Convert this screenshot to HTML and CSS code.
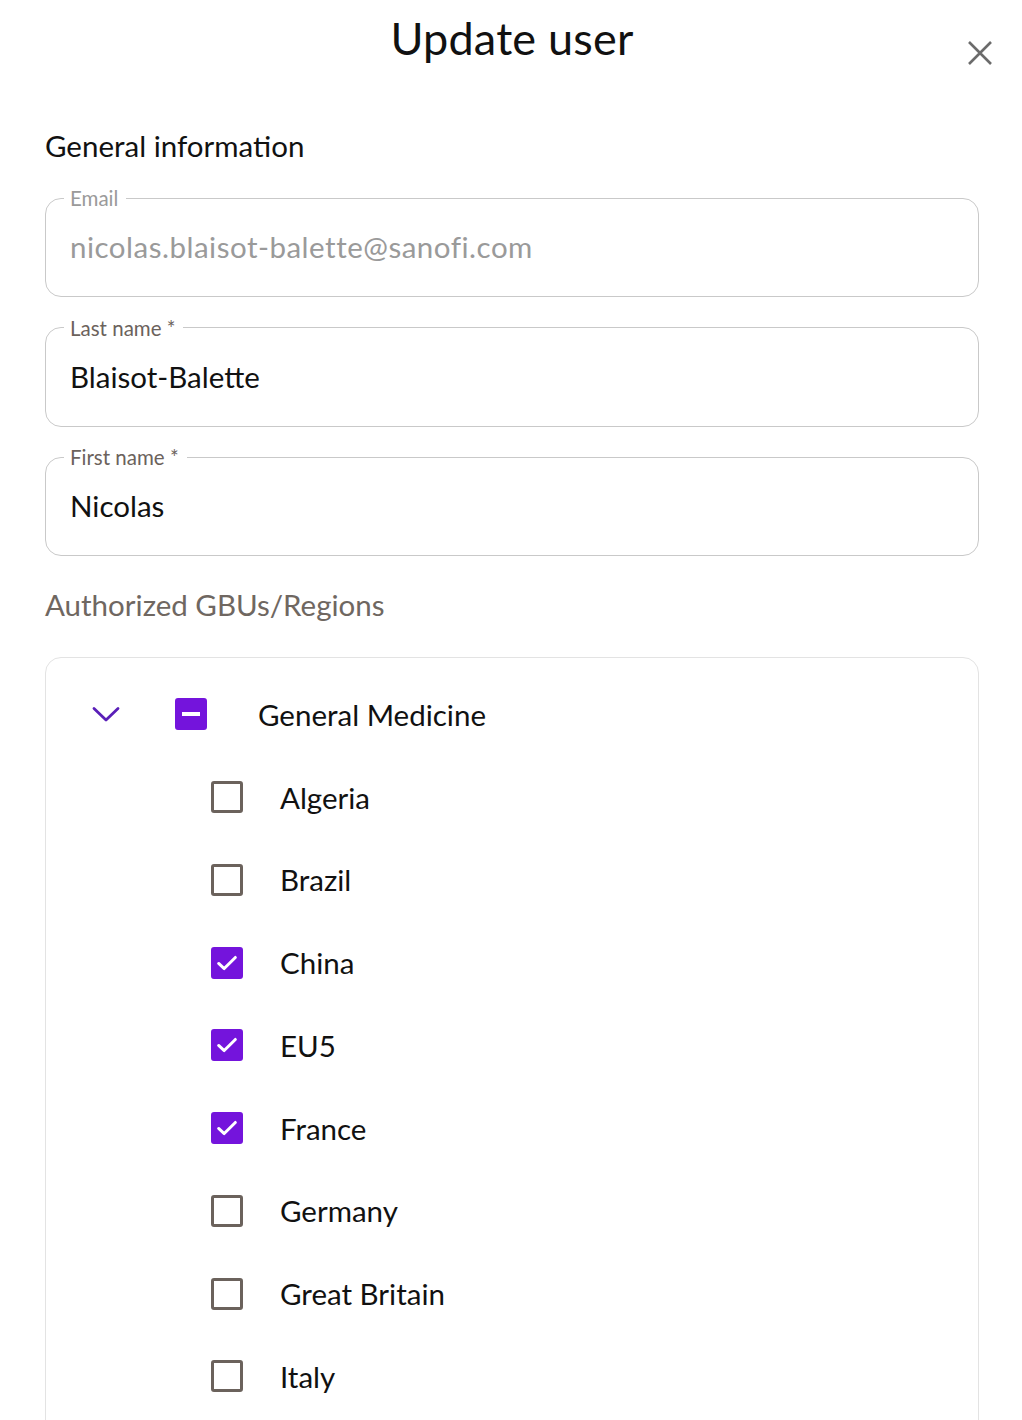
FILE: index.html
```html
<!DOCTYPE html>
<html lang="en">

<head>
    <meta charset="UTF-8">
    <meta name="viewport" content="width=device-width, initial-scale=1.0" />
    <title>Update user</title>
    <link rel="stylesheet" href="styles.css">
</head>

<body>
    <div class="dialog">
        <!-- Header -->
        <header class="dialog-header">
            <h1>Update user</h1>
            <button class="close-btn" aria-label="Close">
                <svg width="28" height="28" viewBox="0 0 28 28">
                    <path d="M3 3 L25 25 M25 3 L3 25" stroke="#6b6b6b" stroke-width="2.6" fill="none" />
                </svg>
            </button>
        </header>

        <h2 class="section-title">General information</h2>

        <!-- Fields -->
        <fieldset class="field disabled">
            <legend>Email</legend>
            <div class="field-value">nicolas.blaisot-balette@sanofi.com</div>
        </fieldset>

        <fieldset class="field">
            <legend>Last name *</legend>
            <div class="field-value">Blaisot-Balette</div>
        </fieldset>

        <fieldset class="field">
            <legend>First name *</legend>
            <div class="field-value">Nicolas</div>
        </fieldset>

        <h2 class="section-title muted">Authorized GBUs/Regions</h2>

        <!-- GBU tree -->
        <div class="tree">
            <div class="tree-row parent">
                <span class="chevron">
                    <svg width="28" height="28" viewBox="0 0 28 28">
                        <path d="M2 8.5 L14 20 L26 8.5" stroke="#5a1fb8" stroke-width="2.8" fill="none" stroke-linecap="round" stroke-linejoin="round" />
                    </svg>
                </span>
                <span class="checkbox partial"><span class="dash"></span></span>
                <span class="label">General Medicine</span>
            </div>

            <div class="tree-row child">
                <span class="checkbox"></span>
                <span class="label">Algeria</span>
            </div>
            <div class="tree-row child">
                <span class="checkbox"></span>
                <span class="label">Brazil</span>
            </div>
            <div class="tree-row child">
                <span class="checkbox checked">
                    <svg width="28" height="28" viewBox="0 0 28 28"><path d="M5 14.5 L11 20 L23 8" stroke="#fff" stroke-width="3.2" fill="none" stroke-linecap="round" stroke-linejoin="round" /></svg>
                </span>
                <span class="label">China</span>
            </div>
            <div class="tree-row child">
                <span class="checkbox checked">
                    <svg width="28" height="28" viewBox="0 0 28 28"><path d="M5 14.5 L11 20 L23 8" stroke="#fff" stroke-width="3.2" fill="none" stroke-linecap="round" stroke-linejoin="round" /></svg>
                </span>
                <span class="label">EU5</span>
            </div>
            <div class="tree-row child">
                <span class="checkbox checked">
                    <svg width="28" height="28" viewBox="0 0 28 28"><path d="M5 14.5 L11 20 L23 8" stroke="#fff" stroke-width="3.2" fill="none" stroke-linecap="round" stroke-linejoin="round" /></svg>
                </span>
                <span class="label">France</span>
            </div>
            <div class="tree-row child">
                <span class="checkbox"></span>
                <span class="label">Germany</span>
            </div>
            <div class="tree-row child">
                <span class="checkbox"></span>
                <span class="label">Great Britain</span>
            </div>
            <div class="tree-row child">
                <span class="checkbox"></span>
                <span class="label">Italy</span>
            </div>
        </div>
    </div>
</body>

</html>
```

FILE: styles.css
```css
/* Reset */
* {
    margin: 0;
    padding: 0;
    box-sizing: border-box;
}

body {
    font-family: Lato, 'Noto Sans', sans-serif;
    background-color: #fff;
    color: #1a1a1a;
}

.dialog {
    padding: 0 43px 0 45px;
}

/* Header */
.dialog-header {
    position: relative;
    height: 76px;
    display: flex;
    justify-content: center;
    align-items: center;
}

.dialog-header h1 {
    font-size: 45px;
    font-weight: 400;
    color: #111;
    letter-spacing: 0.2px;
}

.close-btn {
    position: absolute;
    right: -15px;
    top: 39px;
    background: none;
    border: none;
    cursor: pointer;
    display: flex;
}

.section-title {
    font-size: 29.5px;
    font-weight: 400;
    color: #111;
    margin-top: 52px;
    margin-bottom: 22px;
    line-height: 36px;
}

.section-title.muted {
    color: #6f6761;
    margin-top: 31px;
    margin-bottom: 34px;
}

/* Outlined fields */
.field {
    border: 1px solid #c9c9c9;
    border-radius: 16px;
    padding: 0 24px;
    margin-bottom: 18.5px;
}

.field legend {
    font-size: 20.5px;
    line-height: 24px;
    color: #6b625c;
    padding: 0 8px 0 6px;
    margin-left: -6px;
}

.field.disabled legend {
    color: #9a9a9a;
}

.field-value {
    height: 86px;
    padding-bottom: 13px;
    display: flex;
    align-items: center;
    font-size: 29.5px;
    color: #111;
}

.field.disabled .field-value {
    color: #9a9a9a;
    letter-spacing: 0.5px;
}

/* Tree */
.tree {
    border: 1px solid #e3e3e3;
    border-radius: 16px;
    padding: 15px 0 40px;
}

.tree-row {
    height: 82.75px;
    display: flex;
    align-items: center;
    font-size: 29.5px;
    color: #111;
}

.tree-row.parent {
    padding-left: 46px;
}

.chevron {
    display: flex;
    width: 28px;
}

.tree-row.parent .checkbox {
    margin-left: 55px;
}

.tree-row.parent .label {
    margin-left: 51px;
}

.tree-row.child {
    padding-left: 165px;
}

.tree-row.child .label {
    margin-left: 37px;
}

.checkbox {
    width: 32px;
    height: 32px;
    border: 3px solid #6b625c;
    border-radius: 3px;
    display: flex;
    align-items: center;
    justify-content: center;
    flex-shrink: 0;
}

.checkbox.checked,
.checkbox.partial {
    background-color: #7414dc;
    border-color: #7414dc;
}

.checkbox .dash {
    width: 18px;
    height: 4px;
    background-color: #fff;
}
```
